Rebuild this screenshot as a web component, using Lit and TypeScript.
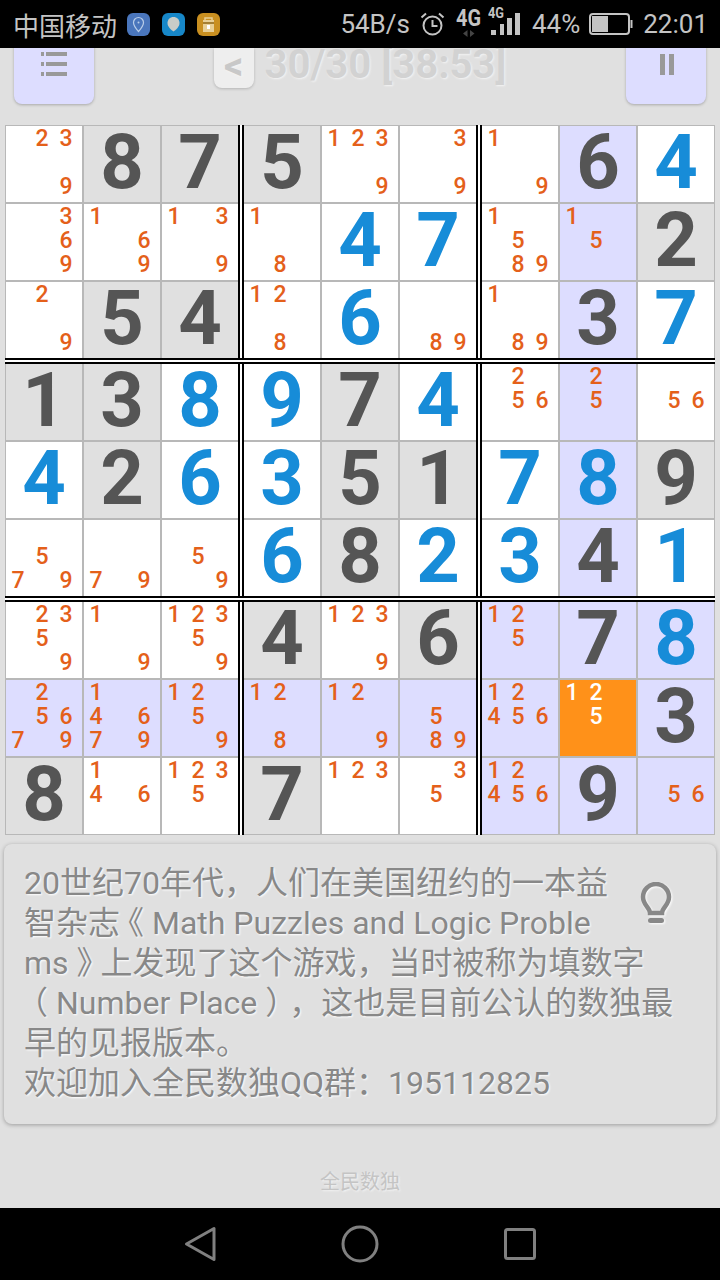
import { LitElement, html, css } from "lit";
import { customElement } from "lit/decorators.js";

// "8" = given, "b4" = blue entered digit, "n239" = pencil marks
const BOARD = [
  ["n239", "8", "7", "5", "n1239", "n39", "n19", "6", "b4"],
  ["n369", "n169", "n139", "n18", "b4", "b7", "n1589", "n15", "2"],
  ["n29", "5", "4", "n128", "b6", "n89", "n189", "3", "b7"],
  ["1", "3", "b8", "b9", "7", "b4", "n256", "n25", "n56"],
  ["b4", "2", "b6", "b3", "5", "1", "b7", "b8", "9"],
  ["n579", "n79", "n59", "b6", "8", "b2", "b3", "4", "b1"],
  ["n2359", "n19", "n12359", "4", "n1239", "6", "n125", "7", "b8"],
  ["n25679", "n14679", "n1259", "n128", "n129", "n589", "n12456", "n125", "3"],
  ["8", "n146", "n1235", "7", "n123", "n35", "n12456", "9", "n56"],
];

const SELECTED = [7, 7];

@customElement("app-root")
export class AppRoot extends LitElement {
  static styles = css`
    :host {
      display: block;
      width: 720px;
      height: 1280px;
      background: #e0e0e0;
      font-family: Roboto, "Noto Sans CJK SC", sans-serif;
      overflow: hidden;
    }
    .page {
      display: flex;
      flex-direction: column;
      height: 1280px;
    }

    .status {
      flex: none;
      height: 48px;
      background: #000;
      color: #c4c4c4;
      display: flex;
      align-items: center;
      padding: 0 12px 0 13px;
      font-size: 26px;
      position: relative;
      z-index: 2;
    }
    .carrier {
      margin-right: 10px;
    }
    .app-icon {
      width: 23px;
      height: 23px;
      border-radius: 6px;
      margin-right: 12px;
      display: block;
    }
    .status-right {
      margin-left: auto;
      display: flex;
      align-items: center;
    }
    .status-right svg {
      display: block;
    }
    .speed {
      margin-right: 9px;
    }
    .clock {
      margin-right: 11px;
    }
    .net {
      margin-right: 2px;
    }
    .bars {
      margin-right: 11px;
    }
    .pct {
      margin-right: 9px;
    }
    .battery {
      margin-right: 10px;
    }

    .top {
      flex: none;
      height: 77px;
      display: flex;
      justify-content: space-between;
      align-items: flex-start;
      padding: 0 14px;
    }
    .square {
      width: 80px;
      height: 80px;
      margin-top: -24px;
      background: #ddddff;
      border-radius: 8px;
      box-shadow: 0 1px 3px rgba(0, 0, 0, 0.25);
      display: flex;
      align-items: center;
      justify-content: center;
    }
    .pause {
      margin-left: 2px;
    }
    .title {
      display: flex;
      align-items: flex-start;
      gap: 11px;
      font-size: 40px;
      font-weight: 700;
      line-height: 34px;
      color: #d2d2d2;
      text-shadow: 1px 1px 2px #f4f4f4;
    }
    .back {
      box-sizing: border-box;
      width: 40px;
      height: 40px;
      padding-bottom: 4px;
      background: #eeeeee;
      border-radius: 0 0 8px 8px;
      box-shadow: 0 1px 3px rgba(0, 0, 0, 0.2);
      display: flex;
      align-items: center;
      justify-content: center;
      font-size: 38px;
      line-height: 34px;
      color: #c8c8c8;
    }

    .board {
      flex: none;
      margin-left: 5px;
      display: grid;
      grid-template-columns: repeat(3, 78px) 4px repeat(3, 78px) 4px repeat(3, 78px);
      grid-template-rows: repeat(3, 78px) 4px repeat(3, 78px) 4px repeat(3, 78px);
      width: 710px;
      height: 710px;
    }
    .cell {
      box-sizing: border-box;
      width: 78px;
      height: 78px;
      border: 1px solid #b8b8b8;
      background: #fff;
    }
    .given {
      background: #e0e0e0;
    }
    .peer {
      background: #ddddff;
    }
    .sel {
      background: #ff9119;
    }
    .big {
      display: flex;
      align-items: center;
      justify-content: center;
      padding-bottom: 3px;
      font-size: 76px;
      font-weight: 700;
      line-height: 73px;
      color: #555555;
    }
    .big.blue {
      color: #178cd8;
    }
    .marks {
      display: grid;
      grid-template-columns: repeat(3, 24px);
      grid-template-rows: repeat(3, 24px);
      padding-top: 1px;
      font-size: 23px;
      font-weight: 500;
      line-height: 24px;
      text-align: center;
      color: #e4601a;
    }
    .sel .marks {
      color: #fff;
    }
    .vline {
      grid-row: 1 / -1;
      width: 6px;
      margin-left: -1px;
      background: linear-gradient(90deg, #000 0 2px, #fff 2px 4px, #000 4px 6px);
    }
    .hline {
      grid-column: 1 / -1;
      height: 6px;
      margin-top: -1px;
      background: linear-gradient(180deg, #000 0 2px, #fff 2px 4px, #000 4px 6px);
    }

    .hint {
      flex: none;
      box-sizing: border-box;
      width: 712px;
      height: 280px;
      margin: 9px 0 0 4px;
      padding: 19px 42px 0 20px;
      background: #e0e0e0;
      border-radius: 8px;
      box-shadow: 0 1px 4px rgba(0, 0, 0, 0.3);
      font-size: 32px;
      line-height: 40px;
      color: #888888;
      text-shadow: 1px 1px 2px #fff;
      word-break: break-all;
    }
    .open {
      margin-left: -8px;
    }
    .close-tight {
      margin-right: -8px;
    }
    .close-wide {
      margin-right: 8px;
    }
    .bulb {
      float: right;
      width: 62px;
      height: 78px;
      display: flex;
      justify-content: flex-end;
      align-items: flex-start;
      padding-right: 2px;
      box-sizing: border-box;
    }
    .bulb svg {
      display: block;
      margin-top: 19px;
      filter: drop-shadow(1px 1px 1px #fff);
    }

    .footer {
      flex: 1;
      display: flex;
      align-items: flex-end;
      justify-content: center;
      padding-bottom: 14px;
      font-size: 20px;
      line-height: 24px;
      color: #c4c4c4;
      text-shadow: 1px 1px 2px #f4f4f4;
    }

    .nav {
      flex: none;
      height: 72px;
      background: #000;
      display: flex;
      align-items: center;
      justify-content: center;
    }
    .nav svg {
      display: block;
    }
  `;

  renderCell(value: string, row: number, col: number) {
    const peer = col === SELECTED[1] || row === SELECTED[0] || (row >= 6 && col >= 6);
    const isSel = row === SELECTED[0] && col === SELECTED[1];
    let cls = "cell";
    if (isSel) cls += " sel";
    else if (peer) cls += " peer";
    else if (!value.startsWith("n") && !value.startsWith("b")) cls += " given";

    if (value.startsWith("n")) {
      const marks = value.slice(1);
      return html`<div class=${cls}>
        <div class="marks">
          ${[1, 2, 3, 4, 5, 6, 7, 8, 9].map(
            (n) => html`<span>${marks.includes(String(n)) ? n : ""}</span>`
          )}
        </div>
      </div>`;
    }
    const blue = value.startsWith("b");
    return html`<div class="${cls} big ${blue ? "blue" : ""}">${blue ? value.slice(1) : value}</div>`;
  }

  renderBoard() {
    const items: unknown[] = [];
    BOARD.forEach((cells, r) => {
      cells.forEach((v, c) => {
        const col = c + 1 + (c >= 3 ? 1 : 0) + (c >= 6 ? 1 : 0);
        const row = r + 1 + (r >= 3 ? 1 : 0) + (r >= 6 ? 1 : 0);
        items.push(html`<div style="grid-column:${col};grid-row:${row}">${this.renderCell(v, r, c)}</div>`);
      });
    });
    return items;
  }

  render() {
    return html`
      <div class="page">
        <div class="status">
          <span class="carrier">中国移动</span>
          <svg class="app-icon" viewBox="0 0 23 23" style="background:#4a76bc">
            <path d="M11.5 4.5a5 5 0 0 1 5 5c0 3.4-5 9-5 9s-5-5.6-5-9a5 5 0 0 1 5-5z" fill="none" stroke="#b8cde8" stroke-width="1.2" />
            <circle cx="11.5" cy="9.5" r="1" fill="#b8cde8" />
          </svg>
          <svg class="app-icon" viewBox="0 0 23 23" style="background:#1787c8">
            <path d="M11.5 4c3.6 0 6 2.6 6 6 0 3.8-3.4 6.6-6 8.5-2.6-1.9-6-4.7-6-8.5 0-3.4 2.4-6 6-6z" fill="#c8ccc8" />
          </svg>
          <svg class="app-icon" viewBox="0 0 23 23" style="background:#c98f20">
            <path d="M6 7h11v12H6z" fill="#e8cf96" />
            <path d="M8 7V5h7v2" fill="none" stroke="#e8cf96" stroke-width="1.5" />
            <path d="M6 10h11" stroke="#8f6512" stroke-width="1.5" />
            <path d="M10 12h3v4h-3z" fill="#fff" />
          </svg>
          <div class="status-right">
            <span class="speed">54B/s</span>
            <svg class="clock" width="26" height="26" viewBox="0 0 26 26" fill="none" stroke="#c4c4c4" stroke-width="2">
              <circle cx="13.5" cy="14.5" r="9" />
              <path d="M13.5 9v6h5M2.5 6.5 7 2.5M24.5 6.5 20 2.5" />
            </svg>
            <svg class="net" width="30" height="42" viewBox="0 0 30 42">
              <text x="0" y="23" font-size="24" font-weight="700" fill="#c4c4c4" font-family="Roboto" textLength="25" lengthAdjust="spacingAndGlyphs">4G</text>
              <path d="M11.5 27v7l-4.5-3.5zM14 27v7l4.5-3.5z" fill="#444" />
            </svg>
            <svg class="bars" width="33" height="36" viewBox="0 0 33 36">
              <text x="0" y="12" font-size="14" font-weight="700" fill="#c4c4c4" font-family="Roboto" textLength="16" lengthAdjust="spacingAndGlyphs">4G</text>
              <path d="M3 24h5v5H3zM12 18h4v11h-4zM19 12h5v17h-5zM27 7h5v22h-5z" fill="#c4c4c4" />
            </svg>
            <span class="pct">44%</span>
            <svg class="battery" width="44" height="24" viewBox="0 0 44 24">
              <rect x="1" y="2" width="39" height="20" rx="3" fill="none" stroke="#c4c4c4" stroke-width="2" />
              <rect x="3" y="4" width="16" height="16" fill="#c4c4c4" />
              <path d="M41.5 8h2v8h-2z" fill="#c4c4c4" />
            </svg>
            <span>22:01</span>
          </div>
        </div>

        <div class="top">
          <div class="square">
            <svg width="26" height="24" viewBox="0 0 26 24" fill="#999">
              <path d="M0 0h3v4H0zM5 0h21v4H5zM0 10h3v4H0zM5 10h21v4H5zM0 20h3v4H0zM5 20h21v4H5z" />
            </svg>
          </div>
          <div class="title">
            <div class="back">&lt;</div>
            <span>30/30 [38:53]</span>
          </div>
          <div class="square">
            <svg class="pause" width="14" height="21" viewBox="0 0 14 21" fill="#999">
              <path d="M0 0h5v21H0zM9 0h5v21H9z" />
            </svg>
          </div>
        </div>

        <div class="board">
          ${this.renderBoard()}
          <div class="vline" style="grid-column:4"></div>
          <div class="vline" style="grid-column:8"></div>
          <div class="hline" style="grid-row:4"></div>
          <div class="hline" style="grid-row:8"></div>
        </div>

        <div class="hint">
          <div class="bulb">
            <svg width="32" height="42" viewBox="0 0 32 42" fill="none" stroke="#888" stroke-width="4.5">
              <path d="M10 31c0-5-7-8-7-16a13 13 0 0 1 26 0c0 8-7 11-7 16z" />
              <path d="M10.5 38.5h11" stroke-width="5" stroke-linecap="round" />
            </svg>
          </div>
          20世纪70年代，人们在美国纽约的一本益智杂志<span class="open">《</span> Math Puzzles and Logic Problems <span class="close-tight">》</span>上发现了这个游戏，当时被称为填数字<br /><span class="open">（</span> Number Place <span class="close-wide">）</span>，这也是目前公认的数独最早的见报版本。<br />欢迎加入全民数独QQ群：195112825
        </div>

        <div class="footer">全民数独</div>

        <div class="nav">
          <svg width="360" height="40" viewBox="0 0 360 40" fill="none" stroke="#808080" stroke-width="3" stroke-linejoin="round">
            <path d="M6.5 20 34 4.5v31z" />
            <circle cx="180" cy="20" r="17" />
            <rect x="325.5" y="5.5" width="29" height="29" rx="2" />
          </svg>
        </div>
      </div>
    `;
  }
}
